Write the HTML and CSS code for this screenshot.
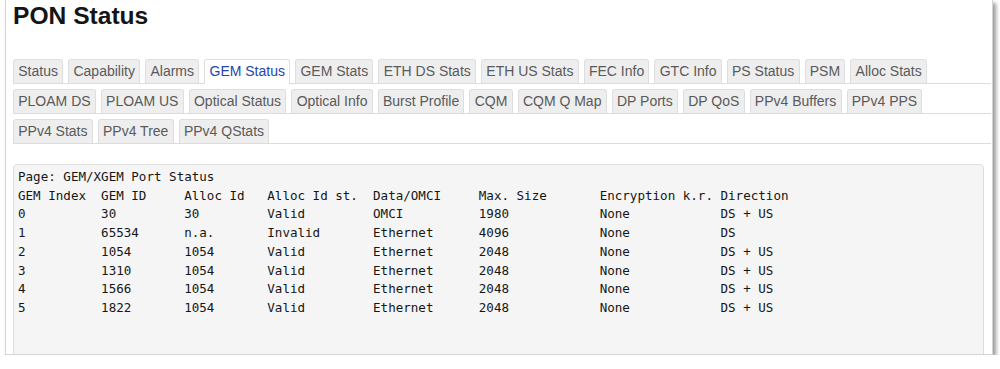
FILE: index.html
```html
<!DOCTYPE html>
<html>
<head>
  <title>PON Status</title>
  <meta name="viewport" content="width=device-width, initial-scale=1.0">
  <link rel="stylesheet" href="styles.css">
</head>
<body>
  <div class="frame">
    <h1>PON Status</h1>

    <div class="tabs">
      <div class="tab-row">
        <a class="tab">Status</a>
        <a class="tab">Capability</a>
        <a class="tab">Alarms</a>
        <a class="tab active">GEM Status</a>
        <a class="tab">GEM Stats</a>
        <a class="tab">ETH DS Stats</a>
        <a class="tab">ETH US Stats</a>
        <a class="tab">FEC Info</a>
        <a class="tab">GTC Info</a>
        <a class="tab">PS Status</a>
        <a class="tab">PSM</a>
        <a class="tab">Alloc Stats</a>
      </div>
      <div class="tab-row">
        <a class="tab">PLOAM DS</a>
        <a class="tab">PLOAM US</a>
        <a class="tab">Optical Status</a>
        <a class="tab">Optical Info</a>
        <a class="tab">Burst Profile</a>
        <a class="tab">CQM</a>
        <a class="tab">CQM Q Map</a>
        <a class="tab">DP Ports</a>
        <a class="tab">DP QoS</a>
        <a class="tab">PPv4 Buffers</a>
        <a class="tab">PPv4 PPS</a>
      </div>
      <div class="tab-row">
        <a class="tab">PPv4 Stats</a>
        <a class="tab">PPv4 Tree</a>
        <a class="tab">PPv4 QStats</a>
      </div>
    </div>

<pre class="output">Page: GEM/XGEM Port Status
GEM Index  GEM ID     Alloc Id   Alloc Id st.  Data/OMCI     Max. Size       Encryption k.r. Direction
0          30         30         Valid         OMCI          1980            None            DS + US
1          65534      n.a.       Invalid       Ethernet      4096            None            DS
2          1054       1054       Valid         Ethernet      2048            None            DS + US
3          1310       1054       Valid         Ethernet      2048            None            DS + US
4          1566       1054       Valid         Ethernet      2048            None            DS + US
5          1822       1054       Valid         Ethernet      2048            None            DS + US
</pre>
  </div>
</body>
</html>
```

FILE: styles.css
```css
body {
  margin: 0;
  background-color: white;
  font-family: "Liberation Sans", Arial, sans-serif;
}
.frame {
  box-sizing: border-box;
  margin-left: 5px;
  width: 988px;
  height: 355px;
  padding: 0 1px 0 7px;
  border: 1px solid #d4d4d4;
  border-top: none;
  box-shadow: 3px 3px 4px rgba(0, 0, 0, 0.4);
  overflow: hidden;
  background-color: white;
}
h1 {
  margin: 0;
  padding-top: 1px;
  font-size: 24.6px;
  line-height: 30px;
  font-weight: bold;
  color: #151515;
}
.tabs {
  margin-top: 28px;
}
.tab-row {
  display: flex;
  gap: 5px;
  border-bottom: 1px solid #dcdcdc;
}
.tab-row + .tab-row {
  margin-top: 5px;
}
.tab {
  display: block;
  padding: 0 4.25px;
  height: 23px;
  line-height: 23px;
  font-size: 14px;
  color: #5a5a5a;
  background-color: #eeeeee;
  border: 1px solid #dedede;
  border-bottom: none;
  border-radius: 3px 3px 0 0;
  text-decoration: none;
  cursor: pointer;
}
.tab.active {
  color: #2346b0;
  background-color: white;
  margin-bottom: -1px;
  height: 24px;
}
.output {
  margin: 20px 7px 0 0;
  padding: 3px 4px;
  min-height: 230px;
  border: 1px solid #dddddd;
  border-radius: 4px;
  background-color: #f5f5f5;
  font-family: "DejaVu Sans Mono", monospace;
  font-size: 12.56px;
  line-height: 18.7px;
  color: #161616;
}
```
